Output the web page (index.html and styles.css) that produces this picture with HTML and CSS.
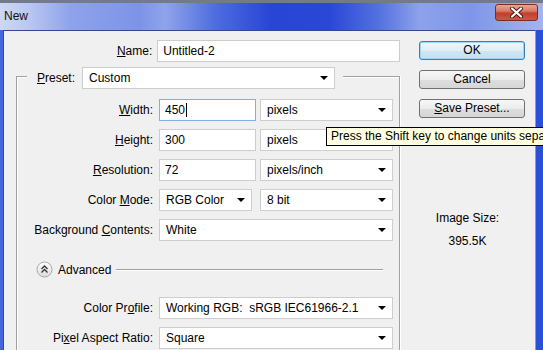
FILE: index.html
```html
<!DOCTYPE html>
<html lang="en">
<head>
<meta charset="UTF-8">
<title>New</title>
<link rel="stylesheet" href="styles.css">
</head>
<body>
<div class="window">
    <div class="titlebar">
        <span class="title">New</span>
        <div class="close">
            <svg width="13" height="11" viewBox="0 0 13 11">
                <path d="M2 1.5 L11 9.5 M11 1.5 L2 9.5" stroke="#4a1710" stroke-width="4" stroke-linecap="round"/>
                <path d="M2 1.5 L11 9.5 M11 1.5 L2 9.5" stroke="#fff" stroke-width="2.2" stroke-linecap="round"/>
            </svg>
        </div>
    </div>

    <div class="client">
        <div class="left">
            <div class="row name-row">
                <span class="lbl"><u>N</u>ame:</span>
                <div class="box w-name">Untitled-2</div>
            </div>

            <div class="group">
                <div class="legend">
                    <span><u>P</u>reset:</span>
                    <div class="box sel w-preset"><span>Custom</span><i class="arrow"></i></div>
                </div>

                <div class="rows">
                    <div class="row">
                        <span class="lbl"><u>W</u>idth:</span>
                        <div class="box focus w-num">450<span class="caret"></span></div>
                        <div class="box sel w-unit"><span>pixels</span><i class="arrow"></i></div>
                    </div>
                    <div class="row">
                        <span class="lbl"><u>H</u>eight:</span>
                        <div class="box w-num">300</div>
                        <div class="box sel w-unit"><span>pixels</span><i class="arrow"></i></div>
                    </div>
                    <div class="row">
                        <span class="lbl"><u>R</u>esolution:</span>
                        <div class="box w-num">72</div>
                        <div class="box sel w-unit"><span>pixels/inch</span><i class="arrow"></i></div>
                    </div>
                    <div class="row">
                        <span class="lbl">Color <u>M</u>ode:</span>
                        <div class="box sel w-mode"><span>RGB Color</span><i class="arrow"></i></div>
                        <div class="box sel w-unit"><span>8 bit</span><i class="arrow"></i></div>
                    </div>
                    <div class="row">
                        <span class="lbl">Background <u>C</u>ontents:</span>
                        <div class="box sel w-full"><span>White</span><i class="arrow"></i></div>
                    </div>
                </div>

                <div class="advanced">
                    <svg class="adv-btn" width="17" height="17" viewBox="0 0 17 17">
                        <defs>
                            <linearGradient id="ag" x1="0" y1="0" x2="0" y2="1">
                                <stop offset="0" stop-color="#ffffff"/>
                                <stop offset="1" stop-color="#dcdcdc"/>
                            </linearGradient>
                        </defs>
                        <circle cx="8.5" cy="8.5" r="7.5" fill="url(#ag)" stroke="#a8a8a8"/>
                        <path d="M5.5 8 L8.5 5 L11.5 8 M5.5 11.5 L8.5 8.5 L11.5 11.5" fill="none" stroke="#333" stroke-width="1.3"/>
                    </svg>
                    <span class="adv-text">Advanced</span>
                    <span class="adv-line"></span>
                </div>

                <div class="rows rows-adv">
                    <div class="row">
                        <span class="lbl">Color Pr<u>o</u>file:</span>
                        <div class="box sel w-full"><span>Working RGB:&nbsp; sRGB IEC61966-2.1</span><i class="arrow"></i></div>
                    </div>
                    <div class="row">
                        <span class="lbl">Pi<u>x</u>el Aspect Ratio:</span>
                        <div class="box sel w-full"><span>Square</span><i class="arrow"></i></div>
                    </div>
                </div>
            </div>
        </div>

        <div class="right">
            <div class="btn default">OK</div>
            <div class="btn">Cancel</div>
            <div class="btn"><u>S</u>ave Preset...</div>
            <div class="info first">Image Size:</div>
            <div class="info">395.5K</div>
        </div>
    </div>

    <div class="tooltip">Press the Shift key to change units separately</div>
</div>
</body>
</html>
```

FILE: styles.css
```css
body{margin:0;font-family:"Liberation Sans",Arial,sans-serif;font-size:12px;color:#000}
.window{width:543px;height:350px;position:relative;overflow:hidden;display:flex;flex-direction:column;background:linear-gradient(to right,#4566dd,#2a50da)}

/* title bar */
.titlebar{height:30px;flex:none;box-sizing:border-box;border-top:3px solid #727a8c;display:flex;justify-content:space-between;align-items:flex-start;
    background:linear-gradient(to right,#cdd7f5 0,#b9c6f2 30px,#8fa3ea 70px,#7d93e7 140px,#90a4eb 165px,#4e6ddf 215px,#2846d5 270px,#2a48d6 330px,#5572e0 380px,#8ea2eb 420px,#7f95e8 470px,#a3b4ef 543px)}
.title{margin:6px 0 0 4px;line-height:14px;color:#111}
.close{width:43px;height:17px;box-sizing:border-box;margin:1px 5px 0 0;border:1px solid #7a2d24;border-radius:3px;display:flex;align-items:center;justify-content:center;
    background:linear-gradient(#e6a696 0,#d77a66 40%,#c23f2e 55%,#c85847 100%)}

/* client area */
.client{flex:1;display:flex;margin:0 7px 0 3px;background:#f0f0f0;border:1px solid #34488e;border-bottom:none;border-right-color:#8d9ac4}
.left{width:396px;flex:none;padding-top:9px}
.right{flex:1;display:flex;flex-direction:column;padding-top:10px}

.row{display:flex;align-items:center;height:22px}
.lbl{width:136px;margin-right:6px;text-align:right;white-space:nowrap}
.name-row .lbl{width:149px;margin-right:5px}

.box{height:22px;box-sizing:border-box;border:1px solid #cdcdcd;background:#fff;padding-left:5px;display:flex;align-items:center;white-space:nowrap}
.box.focus{border-color:#7eb0e6}
.sel{padding-left:6px}
.arrow{margin-left:auto;margin-right:6px;width:0;height:0;border-left:4px solid transparent;border-right:4px solid transparent;border-top:4px solid #000}
.caret{display:inline-block;width:1px;height:14px;background:#000;margin-left:1px}

.w-name{width:244px}
.w-preset{width:253px;margin-left:7px}
.w-num{width:97px}
.w-unit{width:133px;margin-left:4px}
.w-mode{width:93px;margin-right:8px}
.w-mode + .w-unit{margin-left:0}
.w-full{width:234px}

/* preset group */
.group{margin:14px 0 0 12px;width:384px;height:300px;box-sizing:border-box;border:1px solid #a0a0a0;border-bottom:none;box-shadow:inset 1px 1px 0 #fff,1px 0 0 #fff}
.legend{display:flex;align-items:center;width:fit-content;height:22px;margin:-10px 0 0 10px;padding:0 8px 0 10px;background:#f0f0f0}
.rows{display:flex;flex-direction:column;gap:8px;margin-top:10px}
.rows-adv{margin-top:19px}

.advanced{display:flex;align-items:center;height:17px;margin-top:20px}
.adv-btn{margin-left:19px;flex:none}
.adv-text{margin-left:5px}
.adv-line{flex:1;height:0;margin:0 16px 0 5px;border-top:1px solid #a0a0a0;border-bottom:1px solid #fff}

/* buttons */
.btn{width:106px;height:19px;box-sizing:border-box;margin:0 0 10px 19px;border:1px solid #707070;border-radius:3px;text-align:center;line-height:17px;
    background:linear-gradient(#f7f7f7 0,#ececec 50%,#dedede 51%,#d6d6d6 100%)}
.btn.default{border-color:#3c7fb1;box-shadow:inset 0 0 0 1px #9fd5f2;background:linear-gradient(#eef7fc 0,#e0eef7 50%,#cfe6f4 51%,#c4e0f1 100%)}
.info{text-align:center;line-height:14px;margin-top:9px}
.info.first{margin-top:83px}

.tooltip{position:absolute;left:326px;top:127px;height:19px;box-sizing:border-box;padding:0 4px;border:1px solid #000;background:#ffffe1;line-height:17px;white-space:nowrap}
```
